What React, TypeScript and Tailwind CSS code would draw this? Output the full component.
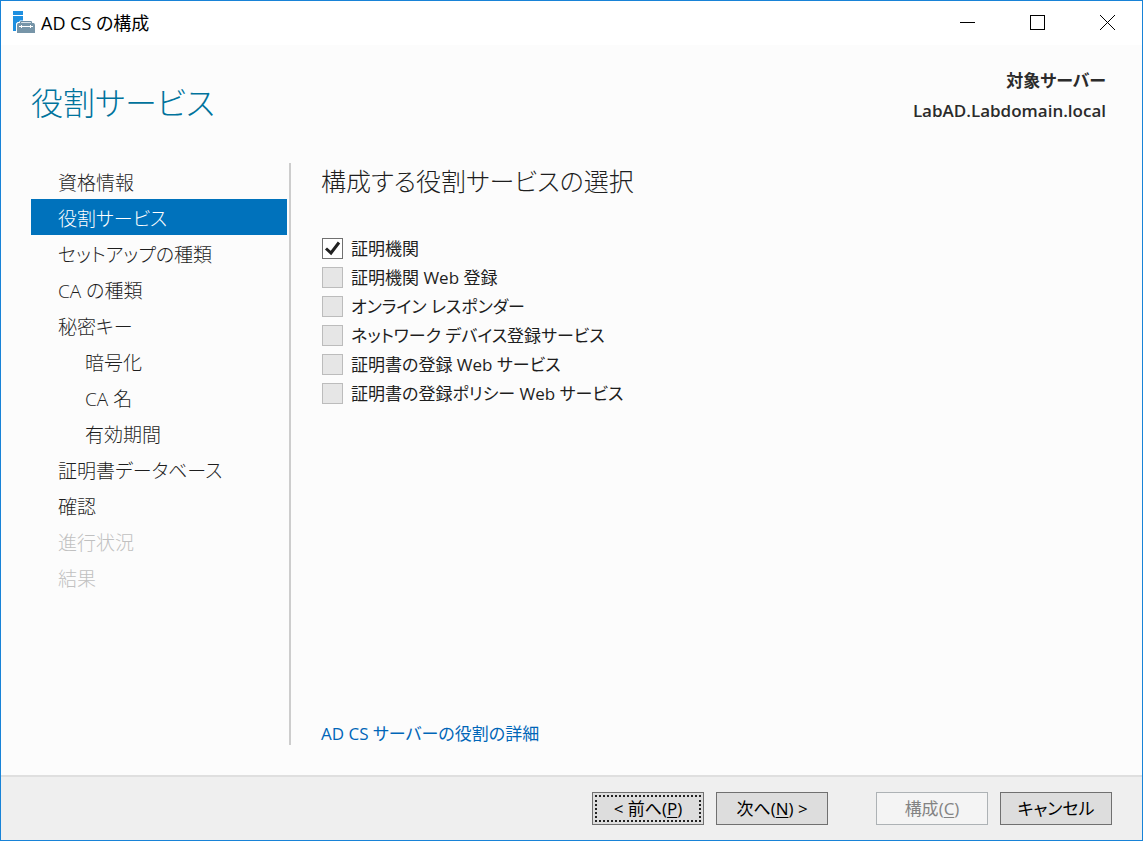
import { useState } from "react";
import clsx from "clsx";

type Step = { label: string; sub?: boolean; disabled?: boolean };

const STEPS: Step[] = [
  { label: "資格情報" },
  { label: "役割サービス" },
  { label: "セットアップの種類" },
  { label: "CA の種類" },
  { label: "秘密キー" },
  { label: "暗号化", sub: true },
  { label: "CA 名", sub: true },
  { label: "有効期間", sub: true },
  { label: "証明書データベース" },
  { label: "確認" },
  { label: "進行状況", disabled: true },
  { label: "結果", disabled: true },
];

const SERVICES = [
  { id: "ca", label: "証明機関", enabled: true },
  { id: "ca-web", label: "証明機関 Web 登録", enabled: false },
  { id: "ocsp", label: "オンライン レスポンダー", enabled: false },
  { id: "ndes", label: "ネットワーク デバイス登録サービス", enabled: false },
  { id: "ces", label: "証明書の登録 Web サービス", enabled: false },
  { id: "cep", label: "証明書の登録ポリシー Web サービス", enabled: false },
];

function AppIcon() {
  return (
    <svg width="23" height="24" viewBox="0 0 23 24" aria-hidden="true">
      <path d="M0 0h10v4H0zM0 5h10v15H0z" fill="#1e8fe0" />
      {/* Toolbox with a white rim over the server */}
      <path d="M3 23V12.5L4.500 11H6l1-1.500h12l1 1.500h1.500L23 12.500V23z" fill="#fff" />
      <path d="M7.500 12.500v-1q0-.800.800-.800h9.400q.800 0 .800.800v1" fill="none" stroke="#6c8da3" strokeWidth="1.200" />
      <path d="M4 13.500l1-1.500h16l1 1.500V22H4z" fill="#7795a8" />
      <path d="M6 15.500h14M8.500 14v3M17.500 14v3" stroke="#fff" />
    </svg>
  );
}

function TitleBar() {
  const button = "grid h-11 w-[70px] place-items-center pb-0.5 hover:bg-gray-200";
  return (
    <header className="flex h-11 items-center bg-white pl-3 text-black">
      <AppIcon />
      <span className="ml-[5px] flex-1 text-[18px] leading-6">AD CS の構成</span>
      <button type="button" aria-label="最小化" className={button}>
        <svg width="15" height="15" stroke="currentColor" shapeRendering="crispEdges">
          <path d="M0 7.5h15" />
        </svg>
      </button>
      <button type="button" aria-label="最大化" className={button}>
        <svg width="15" height="15" fill="none" stroke="currentColor" shapeRendering="crispEdges">
          <path d="M.5.5h14v14H.5z" />
        </svg>
      </button>
      <button type="button" aria-label="閉じる" className={button}>
        <svg width="15" height="15" stroke="currentColor">
          <path d="M0 0l15 15M15 0L0 15" />
        </svg>
      </button>
    </header>
  );
}

function FooterButton({
  before,
  accessKey,
  after,
  focused,
  disabled,
}: {
  before: string;
  accessKey?: string;
  after?: string;
  focused?: boolean;
  disabled?: boolean;
}) {
  return (
    <button
      type="button"
      disabled={disabled}
      className={clsx(
        "h-[33px] w-28 border p-0.5 text-[17px] leading-6",
        disabled
          ? "border-[#adb2b5] bg-[#f4f4f4] text-[#838383]"
          : "border-[#707070] bg-[#dddddd] text-black",
      )}
    >
      <span
        className={clsx(
          "flex h-full items-center justify-center whitespace-pre border-2",
          focused ? "border-dotted border-[#222]" : "border-transparent",
        )}
      >
        {before}
        {accessKey && (
          <>
            (<span className="underline underline-offset-2">{accessKey}</span>)
          </>
        )}
        {after}
      </span>
    </button>
  );
}

export default function App() {
  const [current, setCurrent] = useState(1);
  const [checked, setChecked] = useState<Record<string, boolean>>({ ca: true });

  return (
    <div className="flex min-h-screen flex-col border border-[#1883d7] bg-[#fcfcfc] font-['Open_Sans','Noto_Sans_CJK_JP',sans-serif] text-[#1e1e1e] [font-feature-settings:'palt']">
      <TitleBar />

      <div className="flex h-[118px] items-start justify-between pl-[30px] pr-9 pt-[21px]">
        <h1 className="pt-3 text-[32px] font-light leading-[50px] text-[#00739c]">役割サービス</h1>
        <div className="text-right text-[17px] font-semibold leading-[30px] text-[#2b2b2b]">
          <p>対象サーバー</p>
          <p>LabAD.Labdomain.local</p>
        </div>
      </div>

      <div className="flex flex-1 pb-[30px] pl-[30px] pr-9">
        {/* Wizard steps */}
        <nav className="w-[260px] shrink-0 border-r-2 border-[#cdcdcd] pr-0.5">
          <ol>
            {STEPS.map((step, i) => (
              <li key={step.label}>
                <button
                  type="button"
                  disabled={step.disabled}
                  onClick={() => setCurrent(i)}
                  className={clsx(
                    "block h-9 w-full pt-1 text-left text-[19px] font-light leading-8",
                    step.sub ? "pl-[54px]" : "pl-[27px]",
                    i === current && "bg-[#0072bc] text-white",
                    step.disabled && "text-[#c0c0c0]",
                  )}
                >
                  {step.label}
                </button>
              </li>
            ))}
          </ol>
        </nav>

        {/* Role services */}
        <main className="flex flex-1 flex-col pl-[30px]">
          <h2 className="text-[25px] font-light leading-9">構成する役割サービスの選択</h2>
          <ul className="mt-[35px] flex-1 pl-px">
            {SERVICES.map((service) => (
              <li key={service.id} className="flex h-[29px] items-center">
                <label className="flex items-center gap-2 text-[17px] leading-6">
                  <span className="grid">
                    <input
                      type="checkbox"
                      disabled={!service.enabled}
                      checked={!!checked[service.id]}
                      onChange={(e) => setChecked({ ...checked, [service.id]: e.target.checked })}
                      className="peer col-start-1 row-start-1 size-[21px] appearance-none border border-[#707070] bg-white disabled:border-[#bcbcbc] disabled:bg-[#e6e6e6]"
                    />
                    <svg
                      viewBox="0 0 21 21"
                      className="pointer-events-none invisible col-start-1 row-start-1 size-[21px] peer-checked:visible"
                      fill="none"
                      stroke="#212121"
                      strokeWidth="3"
                    >
                      <path d="M4 10.5l5 4.5 8-10.5" />
                    </svg>
                  </span>
                  {service.label}
                </label>
              </li>
            ))}
          </ul>
          <a href="#" className="self-start text-[17px] leading-[22px] text-[#0066b8]">
            AD CS サーバーの役割の詳細
          </a>
        </main>
      </div>

      <footer className="flex h-[65px] items-center justify-end gap-3 border-t-2 border-[#dfdfdf] bg-[#efefef] pr-[30px]">
        <FooterButton before="< 前へ" accessKey="P" focused />
        <FooterButton before="次へ" accessKey="N" after=" >" />
        <div className="ml-9 flex gap-3">
          <FooterButton before="構成" accessKey="C" disabled />
          <FooterButton before="キャンセル" />
        </div>
      </footer>
    </div>
  );
}
